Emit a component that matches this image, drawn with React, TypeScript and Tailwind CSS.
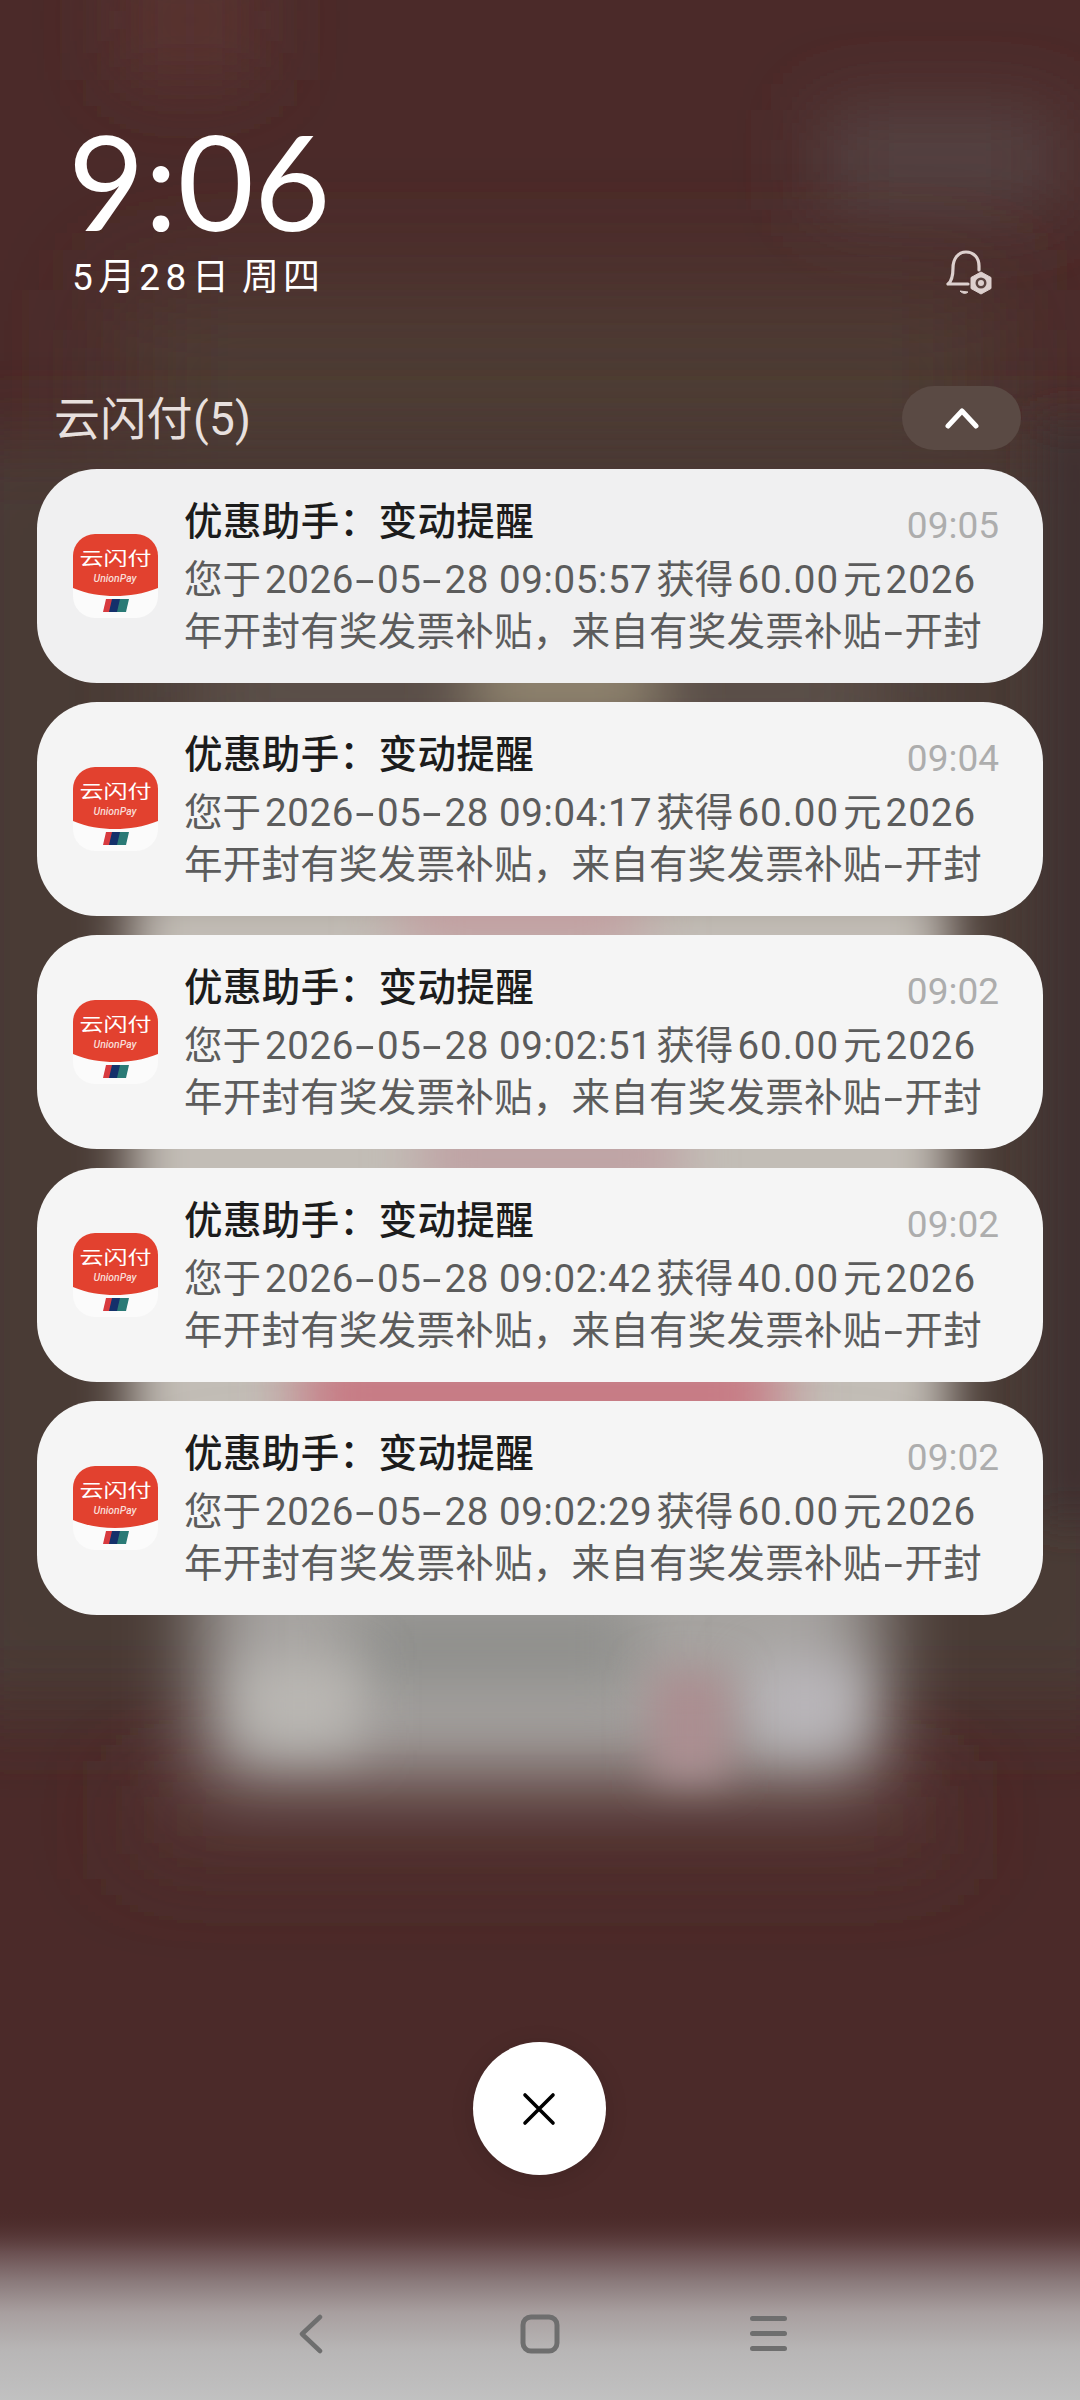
import React from "react";

const Hy = () => <span className="inline-block w-[23px] text-center scale-x-[1.8]">-</span>;

const Logo = () => (
  <svg width="85" height="84" viewBox="0 0 85 84" className="shrink-0">
    <defs>
      <clipPath id="logoClip">
        <rect x="0" y="0" width="85" height="84" rx="22" />
      </clipPath>
    </defs>
    <g clipPath="url(#logoClip)">
      <rect width="85" height="84" fill="#fbfbfb" />
      <path d="M0 0H85V54C70 60 56 62 42 62C28 62 14 60 0 54Z" fill="#e2412f" />
      <text x="42.5" y="31" textAnchor="middle" fontSize="18" fontWeight="400" fill="#fff" fontFamily="'Noto Sans CJK SC',sans-serif" textLength="72" lengthAdjust="spacingAndGlyphs">云闪付</text>
      <text x="42" y="48" textAnchor="middle" fontSize="10.5" fontStyle="italic" fontWeight="500" fill="#f9dcd6" fontFamily="Roboto,sans-serif" textLength="43" lengthAdjust="spacingAndGlyphs">UnionPay</text>
      <path d="M33 65H41L38 78H30Z" fill="#d83a3f" />
      <path d="M39 65H48L45 78H36Z" fill="#14306b" />
      <path d="M47 65H56L53 78H44Z" fill="#2a7a76" />
    </g>
  </svg>
);

const Card = ({ time, stamp, amount, tone }: { time: string; stamp: string; amount: string; tone: string }) => (
  <div className={`h-[214px] rounded-[60px] flex items-center pl-[36px] pr-[44px] gap-[26px] ${tone}`}>
    <Logo />
    <div className="flex-1 min-w-0 font-['Roboto','Noto_Sans_CJK_SC',sans-serif] whitespace-nowrap">
      <div className="flex justify-between items-center h-[52px] mb-[7px]">
        <span className="text-[38.5px] tracking-[0.4px] font-medium text-[#1c1c1c] translate-y-[1px]">优惠助手：变动提醒</span>
        <span className="text-[37px] text-[#adadad] translate-y-[5px]">{time}</span>
      </div>
      <div className="text-[38.5px] leading-[52px] text-[#5c5c5c]">
        <div>
          您于<span className="ml-[4px] mr-[4px] tracking-[0.6px]">2026<Hy />05<Hy />28 {stamp}</span>获得<span className="mx-[4px] tracking-[1px]">{amount}</span>元<span className="ml-[4px] tracking-[1px]">2026</span>
        </div>
        <div className="tracking-[0.25px]">
          年开封有奖发票补贴，来自有奖发票补贴<Hy />开封
        </div>
      </div>
    </div>
  </div>
);

const Blob = ({ x, y, w, h, c, b }: { x: number; y: number; w: number; h: number; c: string; b: number }) => (
  <rect x={x} y={y} width={w} height={h} fill={c} filter={`url(#b${b})`} />
);

const Background = () => (
  <svg className="absolute inset-0" width="1080" height="2400" viewBox="0 0 1080 2400">
    <defs>
      {[20, 26, 30, 40, 50, 60].map((s) => (
        <filter key={s} id={`b${s}`} filterUnits="userSpaceOnUse" x="-300" y="-300" width="1700" height="3000">
          <feGaussianBlur stdDeviation={s} />
        </filter>
      ))}
      <linearGradient id="navFade" x1="0" y1="0" x2="0" y2="1">
        <stop offset="0" stopColor="#4b2a29" stopOpacity="0" />
        <stop offset="0.22" stopColor="#6a4f50" />
        <stop offset="0.38" stopColor="#8b7b7c" />
        <stop offset="0.54" stopColor="#a89f9f" />
        <stop offset="0.74" stopColor="#b8b6b6" />
        <stop offset="1" stopColor="#c1c1c1" />
      </linearGradient>
    </defs>
    <rect width="1080" height="2400" fill="#4b2a29" />
    <Blob x={120} y={-40} w={140} h={120} c="#5a3431" b={40} />
    <Blob x={820} y={110} w={240} h={100} c="#544444" b={40} />
    <Blob x={120} y={290} w={880} h={190} c="#4e3e35" b={60} />
    <Blob x={-60} y={440} w={1200} h={1270} c="#4a3a35" b={40} />
    <Blob x={1040} y={420} w={70} h={1100} c="#403030" b={20} />
    <Blob x={180} y={590} w={720} h={180} c="#5c5048" b={50} />
    <Blob x={470} y={650} w={190} h={70} c="#9a8e76" b={30} />
    <Blob x={130} y={880} w={820} h={640} c="#c2bdb6" b={26} />
    <Blob x={130} y={1790} w={820} h={60} c="#553632" b={50} />
    <Blob x={200} y={1480} w={680} h={300} c="#a6a3a0" b={40} />
    <Blob x={400} y={860} w={240} h={90} c="#c39ea0" b={30} />
    <Blob x={420} y={1110} w={260} h={90} c="#bfa3a4" b={26} />
    <Blob x={300} y={1350} w={480} h={90} c="#c8737f" b={30} />
    <Blob x={350} y={1600} w={290} h={90} c="#8f8f8c" b={30} />
    <Blob x={240} y={1660} w={120} h={90} c="#bab7b3" b={26} />
    <Blob x={750} y={1660} w={110} h={90} c="#b9b6ba" b={26} />
    <Blob x={650} y={1670} w={80} h={110} c="#ab8e91" b={20} />
    <rect x="0" y="2210" width="1080" height="190" fill="url(#navFade)" />
  </svg>
);

export default function App() {
  return (
    <div className="relative w-[1080px] h-[2400px] overflow-hidden">
      <Background />
      <div className="relative flex flex-col">
        <div className="pt-[120px] pl-[68px] h-[243px] font-['Lato','Noto_Sans_CJK_SC',sans-serif] text-[132px] leading-[120px] text-white">
          9:06
        </div>
        <div className="flex items-start justify-between pl-[72px] pr-[88px] mt-[11px] h-[48px]">
          <div className="leading-[48px] text-[37px] text-white tracking-[4px] font-['Roboto','Noto_Sans_CJK_SC',sans-serif]">
            <span className="tracking-[5.5px]">5</span>月<span className="tracking-[5.5px]">28</span>日<span className="tracking-normal"> </span>周四
          </div>
          <svg width="46" height="46" viewBox="0 0 46 46" fill="none" className="-mt-[4px]">
            <path d="M2 34C6 31 7 26 7 18C7 9 12 2 20 2C28 2 33 8 33 16V20M2 34H22" stroke="#ddd0ce" strokeWidth="3.2" strokeLinecap="round" strokeLinejoin="round" />
            <path d="M14 41C17 44 20 44 22 42Z" fill="#ddd0ce" stroke="#ddd0ce" strokeWidth="1" />
            <path d="M35 22L45 27.5V38.5L35 44L25 38.5V27.5Z" fill="#ddd0ce" stroke="#ddd0ce" strokeWidth="1" strokeLinejoin="round" />
            <circle cx="35" cy="33" r="5.5" fill="#5a4440" />
            <circle cx="35" cy="33" r="3" fill="#ddd0ce" />
          </svg>
        </div>
        <div className="flex items-center justify-between mt-[84px] h-[64px] pl-[54px] pr-[59px]">
          <span className="text-[46px] tracking-[0.3px] text-[#e8e0de] translate-y-[1px] font-['Roboto','Noto_Sans_CJK_SC',sans-serif]">云闪付(5)</span>
          <div className="w-[119px] h-[64px] rounded-full bg-[#5a4a44] flex items-center justify-center">
            <svg width="34" height="22" viewBox="0 0 34 22" fill="none" stroke="#fff" strokeWidth="5" strokeLinecap="round" strokeLinejoin="round">
              <path d="M3 19L17 4L31 19" />
            </svg>
          </div>
        </div>
        <div className="flex flex-col gap-[19px] mt-[19px] px-[37px]">
          <Card tone="bg-[#f0f0f1]" time="09:05" stamp="09:05:57" amount="60.00" />
          <Card tone="bg-[#f4f4f4]" time="09:04" stamp="09:04:17" amount="60.00" />
          <Card tone="bg-[#f5f5f5]" time="09:02" stamp="09:02:51" amount="60.00" />
          <Card tone="bg-[#f5f5f5]" time="09:02" stamp="09:02:42" amount="40.00" />
          <Card tone="bg-[#f5f5f5]" time="09:02" stamp="09:02:29" amount="60.00" />
        </div>
        <div className="mt-[427px] self-center -ml-[2px] w-[133px] h-[133px] rounded-full bg-white shadow-[0_4px_24px_rgba(0,0,0,0.12)] flex items-center justify-center">
          <svg width="34" height="34" viewBox="0 0 34 34" fill="none" stroke="#000" strokeWidth="3.6" strokeLinecap="round">
            <path d="M3 3L31 31M31 3L3 31" />
          </svg>
        </div>
        <div className="flex items-center mt-[139px] h-[40px] pl-[299px]">
          <svg width="24" height="40" viewBox="0 0 24 40" fill="none" stroke="#6e6e6e" strokeWidth="4.5" strokeLinecap="round" strokeLinejoin="round">
            <path d="M21 3L3 20L21 37" />
          </svg>
          <svg width="40" height="40" viewBox="0 0 40 40" fill="none" stroke="#6e6e6e" strokeWidth="5" className="ml-[197px]">
            <rect x="3" y="3" width="34" height="34" rx="8" />
          </svg>
          <svg width="37" height="36" viewBox="0 0 37 36" fill="#6e6e6e" className="ml-[190px]">
            <rect x="0" y="0" width="37" height="5" rx="2.5" />
            <rect x="0" y="15" width="37" height="5" rx="2.5" />
            <rect x="0" y="30" width="37" height="5" rx="2.5" />
          </svg>
        </div>
      </div>
    </div>
  );
}
